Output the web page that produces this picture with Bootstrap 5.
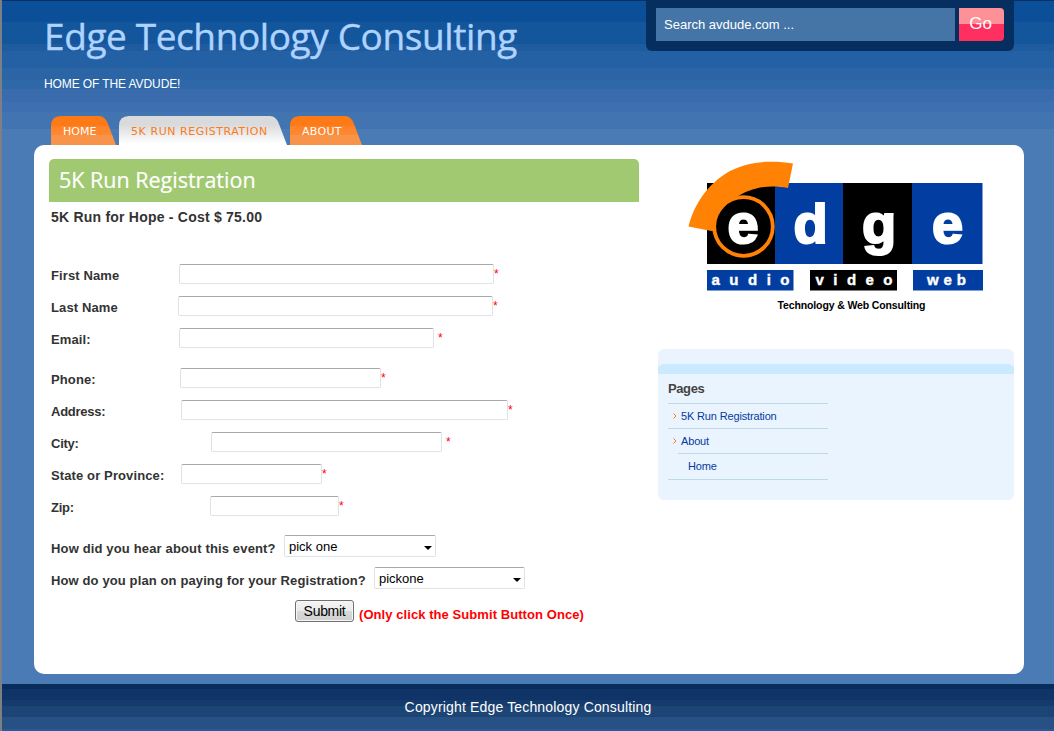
<!DOCTYPE html>
<html lang="en">
<head>
<meta charset="utf-8">
<meta name="viewport" content="width=device-width, initial-scale=1">
<title>Edge Technology Consulting</title>
<link href="https://cdn.jsdelivr.net/npm/bootstrap@5.3.0/dist/css/bootstrap.min.css" rel="stylesheet">
<style>
body{font-family:"Liberation Sans",Arial,sans-serif;font-size:13px;line-height:16px;color:#333;height:731px;overflow:hidden;border-left:2px solid #7b7f86;
background:#4a7bb5 linear-gradient(#082f5f 0 1px,#0b4f98 1px 22px,#13569c 22px 44px,#1f5c9f 44px 51px,#2361a4 51px 68px,#2b65a5 68px 80px,#2e68a8 80px 89px,#396bad 89px 102px,#3d6fb1 102px 112px,#4274b2 112px 129px,#4a7bb5 129px) no-repeat;}
.top-area{height:145px;padding-left:42px;padding-right:40px}
.masthead{height:92px}
.site-name{font:400 37px/48px "Open Sans",sans-serif;letter-spacing:-.4px;-webkit-text-stroke:.4px #aed3ff;color:#aed3ff;margin:12px 0 0;white-space:nowrap}
.tagline{font-size:12px;letter-spacing:-.1px;color:#fff;margin-top:16px;white-space:nowrap}
.search-box{background:#062f60;width:368px;height:51px;border-radius:0 0 6px 6px;padding:8px 10px 10px}
.search-box input{background:#4575a6;border:0;border-radius:0;color:#fff;font-size:13px;padding:0 8px;width:299px;height:33px}
.search-box input::placeholder{color:#fff;opacity:1}
.go-btn{width:45px;height:33px;border:0;border-radius:0 4px 4px 0;background:linear-gradient(#fe9097 0 16px,#ff305f 16px);color:#fff;font-size:17px;padding:0 2px 1px 0}
.tabs{margin:24px 0 0 7px;height:29px}
.tab{position:relative;height:29px;font:11px/29px "DejaVu Sans",Verdana,sans-serif;color:#fff;text-decoration:none;white-space:nowrap;padding-left:12px;padding-top:1px}
.tab svg{position:absolute;left:0;top:0;z-index:0}
.tab span{position:relative;z-index:1}
.tab-home{width:68px}.tab-run{width:171px;color:#fd7a17}.tab-about{width:72px}
.tab-run span{letter-spacing:.57px}.tab-about span{letter-spacing:.3px}
.panel{width:990px;height:529px;margin-left:32px;border-radius:10px;background:#fff;padding:14px 10px 0 15px}
.main-col{width:590px}
.page-title{background:#a0c972;height:43px;border-radius:5px 5px 0 0;color:#fff;font:400 21.5px/42px "Open Sans",sans-serif;-webkit-text-stroke:.2px #fff;padding-left:10px;margin:0}
.event-form{padding-left:2px}
.event-line{font-weight:700;font-size:14px;letter-spacing:.22px;margin:7px 0 33px}
.f-row{height:32px}
.f-row label{font-weight:700;letter-spacing:.12px;white-space:nowrap;padding-top:3px;width:129px}
.f-row input{height:20px;border:1px solid #dfe2e6;border-top-color:#a9a9ad;border-radius:2px;padding:0 3px;background:#fff}
.req{color:#f00;font-size:12px;line-height:12px}
.f-row .req{margin-bottom:1px}
.lab-first{width:128px!important}.lab-last{width:127px!important}.lab-wide{width:160px!important}.lab-zip{width:159px!important}.lab-addr{width:130px!important}
.f-row .tight{letter-spacing:-.25px}
.w-name{width:315px}.w-email{width:255px}.w-phone{width:201px}.w-addr{width:327px}.w-city{width:231px}.w-state{width:141px}.w-zip{width:129px}
.f-row .q-hear{width:233px;letter-spacing:.15px;padding-top:5px}.f-row .q-pay{width:323px;letter-spacing:.12px;padding-top:5px}
.pick{height:22px;border:1px solid #dfe2e6;border-top-color:#a9a9ad;border-radius:2px;appearance:none;color:#000;font-size:13px;padding:0 4px;line-height:19px;
background:#fff url("data:image/svg+xml,%3Csvg xmlns='http://www.w3.org/2000/svg' width='8' height='4'%3E%3Cpath d='M0 0h8L4 4z'/%3E%3C/svg%3E") no-repeat right 3px top 10px}
.pick-hear{width:152px}.pick-pay{width:151px}
.send{width:59px;height:22px;border:1px solid #707070;border-radius:3px;background:linear-gradient(#f4f4f4 0,#ebebeb 48%,#d8d9d9 50%,#cfcfcf);box-shadow:inset 0 0 0 1px #f7f7f7;color:#000;font-size:14px;letter-spacing:-.3px;line-height:16px;padding:0 0 1px}
.send-row{height:32px;padding-left:244px;margin-top:1px}
.once{color:#f00;font-weight:700;letter-spacing:.07px;margin-left:5px;padding-top:7px;white-space:nowrap}
.side-col{width:356px;margin-left:19px}
.logo{display:block;margin:-4px 0 29px 22px}
.pages-box{height:151px;border-radius:6px;padding:15px 0 0;background:#e9f4ff}
.pages-band{height:10px;background:#cceaff;clip-path:polygon(4px 0,352px 0,100% 3px,100% 100%,0 100%,0 3px)}
.pages-box h2{font-size:13px;line-height:16px;font-weight:700;letter-spacing:-.4px;color:#444;margin:7px 0 0 10px}
.page-list{width:160px;margin:6px 0 0 10px;border-bottom:1px solid #bdd9e8;font-size:11px;letter-spacing:-.15px;line-height:24px}
.page-list li{border-top:1px solid #bdd9e8;height:25px}
.page-list .child{margin-left:10px;padding-left:10px;height:26px}
.page-list a{color:#063ba0;text-decoration:none;white-space:nowrap}
.page-list svg{margin:-3px 4px 0 5px}
.foot{height:47px;margin-top:10px;color:#fff;font-size:14px;letter-spacing:.16px;padding-top:15px;background:linear-gradient(#082d5b 0 5px,#103467 5px 16px,#143b6b 16px 22px,#1c4474 22px 33px,#275085 33px 45px,#2d5898 45px)}
</style>
</head>
<body>
<header class="top-area d-flex flex-column">
  <div class="masthead d-flex justify-content-between align-items-start">
    <div>
      <h1 class="site-name">Edge Technology Consulting</h1>
      <div class="tagline">HOME OF THE AVDUDE!</div>
    </div>
    <form class="search-box d-flex gap-1">
      <input type="text" placeholder="Search avdude.com ..." aria-label="Search">
      <button class="go-btn" type="button">Go</button>
    </form>
  </div>
  <nav class="tabs d-flex">
    <a class="tab tab-home" href="#"><svg width="65" height="29"><defs><linearGradient id="og" x2="0" y2="1"><stop offset=".33" stop-color="#fd7a17"/><stop offset=".33" stop-color="#fe8228"/><stop offset=".66" stop-color="#fd8931"/><stop offset=".66" stop-color="#f79449"/></linearGradient><linearGradient id="wg" x2="0" y2="1"><stop offset=".3" stop-color="#d8dadb"/><stop offset=".95" stop-color="#fff"/></linearGradient></defs><path fill="url(#og)" d="M0 29V10Q0 0 10 0H48Q54 0 57 8L65 29Z"/></svg><span>HOME</span></a>
    <a class="tab tab-run" href="#"><svg width="168" height="29"><path fill="url(#wg)" d="M0 29V10Q0 0 10 0H151Q157 0 160 8L168 29Z"/></svg><span>5K RUN REGISTRATION</span></a>
    <a class="tab tab-about" href="#"><svg width="72" height="29"><path fill="url(#og)" d="M0 29V10Q0 0 10 0H55Q61 0 64 8L72 29Z"/></svg><span>ABOUT</span></a>
  </nav>
</header>
<main class="panel d-flex align-items-start">
  <section class="main-col">
    <h2 class="page-title">5K Run Registration</h2>
    <form class="event-form">
      <p class="event-line">5K Run for Hope - Cost $ 75.00</p>
      <div class="f-row d-flex align-items-center"><label class="lab-first" for="first">First Name</label><input id="first" class="w-name"><span class="req">*</span></div>
      <div class="f-row d-flex align-items-center"><label class="lab-last" for="last">Last Name</label><input id="last" class="w-name"><span class="req">*</span></div>
      <div class="f-row d-flex align-items-center mb-2"><label class="lab-first" for="email">Email:</label><input id="email" class="w-email"><span class="req ms-1">*</span></div>
      <div class="f-row d-flex align-items-center"><label for="phone">Phone:</label><input id="phone" class="w-phone"><span class="req">*</span></div>
      <div class="f-row d-flex align-items-center"><label class="lab-addr tight" for="addr">Address:</label><input id="addr" class="w-addr"><span class="req">*</span></div>
      <div class="f-row d-flex align-items-center"><label class="lab-wide tight" for="city">City:</label><input id="city" class="w-city"><span class="req ms-1">*</span></div>
      <div class="f-row d-flex align-items-center"><label class="lab-addr" for="state">State or Province:</label><input id="state" class="w-state"><span class="req">*</span></div>
      <div class="f-row d-flex align-items-center mb-2"><label class="lab-zip tight" for="zip">Zip:</label><input id="zip" class="w-zip"><span class="req">*</span></div>
      <div class="f-row d-flex align-items-center"><label class="q-hear" for="hear">How did you hear about this event?</label><select id="hear" class="pick pick-hear"><option>pick one</option></select></div>
      <div class="f-row d-flex align-items-center"><label class="q-pay" for="pay">How do you plan on paying for your Registration?</label><select id="pay" class="pick pick-pay"><option>pickone</option></select></div>
      <div class="send-row d-flex align-items-center"><button class="send" type="button">Submit</button><span class="once">(Only click the Submit Button Once)</span></div>
    </form>
  </section>
  <aside class="side-col">
    <svg class="logo" width="310" height="165" viewBox="680 155 310 165" font-family="Liberation Sans, Arial, sans-serif" font-weight="700">
      <path d="M707 183h68v81h-68zM843 183h69v81h-69zM810 270h87v20.500h-87z"/>
      <path fill="#023ea1" d="M775 183h68v81h-68zM912 183h70.500v81H912zM707 270h86.500v20.500H707zM913 270h70v20.500h-70z"/>
      <path fill="#ff8205" d="M688.500 226.500C694 205 707 184 730 171C750 161 772 160 793 163.500L788 188C767 184 750 188 736 197.500C722 202 713 213 714 231.500Z"/>
      <circle cx="743.500" cy="226.500" r="29.300" stroke="#ff8205" stroke-width="3.800"/>
      <g fill="#fff" stroke="#fff" stroke-width="2.200" font-size="56" text-anchor="middle">
        <text x="743" y="243">e</text><text x="810.500" y="243">d</text><text x="879" y="243">g</text><text x="947.500" y="243">e</text>
      </g>
      <g fill="#fff" stroke="#fff" stroke-width=".4" font-size="15">
        <text x="711.500" y="285" textLength="78">audio</text><text x="815.500" y="285" textLength="77">video</text><text x="927" y="285" textLength="39">web</text>
      </g>
      <text x="777.500" y="309" font-size="10.500" textLength="148">Technology &amp; Web Consulting</text>
    </svg>
    <div class="pages-box">
      <div class="pages-band"></div>
      <h2>Pages</h2>
      <ul class="page-list list-unstyled">
        <li><svg width="4" height="6" viewBox="0 0 4 6"><path d="M.5.500l2.500 2.500-2.500 2.500" fill="none" stroke="#fd7a17"/></svg><a href="#">5K Run Registration</a></li>
        <li><svg width="4" height="6" viewBox="0 0 4 6"><path d="M.5.500l2.500 2.500-2.500 2.500" fill="none" stroke="#fd7a17"/></svg><a href="#">About</a></li>
        <li class="child"><a href="#">Home</a></li>
      </ul>
    </div>
  </aside>
</main>
<footer class="foot text-center">Copyright Edge Technology Consulting</footer>
<script src="https://cdn.jsdelivr.net/npm/bootstrap@5.3.0/dist/js/bootstrap.bundle.min.js"></script>
</body>
</html>
